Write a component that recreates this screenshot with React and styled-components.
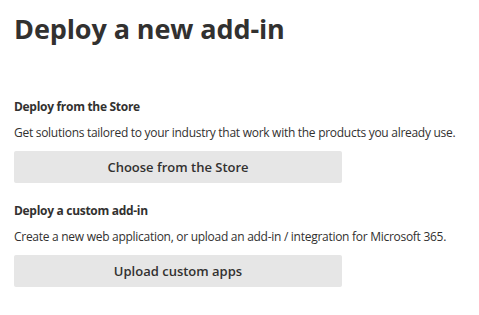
import styled, { createGlobalStyle } from 'styled-components';

const GlobalStyle = createGlobalStyle`
  body {
    margin: 0;
    background: #ffffff;
    font-family: 'Open Sans', 'Noto Sans', sans-serif;
    color: #323130;
  }
`;

const Page = styled.div`
  padding: 9px 14px 0 14px;
`;

const Title = styled.h1`
  margin: 0;
  font-size: 27px;
  line-height: 40px;
  font-weight: 700;
  color: #323130;
  letter-spacing: -0.1px;
`;

const Section = styled.section`
  display: flex;
  flex-direction: column;
  margin-top: ${(p) => p.gap}px;
`;

const Heading = styled.h2`
  margin: 0;
  font-size: 12px;
  line-height: 20px;
  font-weight: 700;
  letter-spacing: -0.3px;
`;

const Text = styled.p`
  margin: 6px 0 0 0;
  font-size: 12px;
  line-height: 20px;
  font-weight: 400;
  letter-spacing: -0.28px;
`;

const Button = styled.button`
  margin-top: 8px;
  width: 328px;
  height: 32px;
  border: none;
  border-radius: 2px;
  background: #e6e6e6;
  font-family: 'Open Sans', 'Noto Sans', sans-serif;
  font-size: 13px;
  font-weight: 600;
  color: #323130;
  cursor: pointer;
`;

export default function App() {
  return (
    <>
      <GlobalStyle />
      <Page>
        <Title>Deploy a new add-in</Title>
        <Section gap={48}>
          <Heading>Deploy from the Store</Heading>
          <Text>Get solutions tailored to your industry that work with the products you already use.</Text>
          <Button type="button">Choose from the Store</Button>
        </Section>
        <Section gap={18}>
          <Heading>Deploy a custom add-in</Heading>
          <Text>Create a new web application, or upload an add-in / integration for Microsoft 365.</Text>
          <Button type="button">Upload custom apps</Button>
        </Section>
      </Page>
    </>
  );
}
